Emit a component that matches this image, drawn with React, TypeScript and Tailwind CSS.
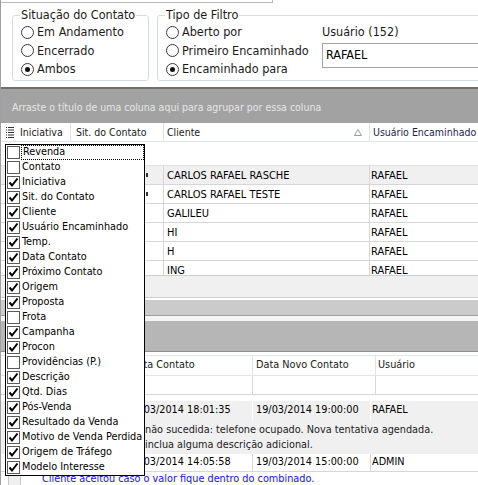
import React from 'react';

const columns = [
  { label: 'Revenda', checked: false },
  { label: 'Contato', checked: false },
  { label: 'Iniciativa', checked: true },
  { label: 'Sit. do Contato', checked: true },
  { label: 'Cliente', checked: true },
  { label: 'Usuário Encaminhado', checked: true },
  { label: 'Temp.', checked: true },
  { label: 'Data Contato', checked: true },
  { label: 'Próximo Contato', checked: true },
  { label: 'Origem', checked: true },
  { label: 'Proposta', checked: true },
  { label: 'Frota', checked: false },
  { label: 'Campanha', checked: true },
  { label: 'Procon', checked: true },
  { label: 'Providências (P.)', checked: false },
  { label: 'Descrição', checked: true },
  { label: 'Qtd. Dias', checked: true },
  { label: 'Pós-Venda', checked: true },
  { label: 'Resultado da Venda', checked: true },
  { label: 'Motivo de Venda Perdida', checked: true },
  { label: 'Origem de Tráfego', checked: true },
  { label: 'Modelo Interesse', checked: true },
];

const contacts = [
  { cliente: 'CARLOS RAFAEL RASCHE', usuario: 'RAFAEL', mark: true },
  { cliente: 'CARLOS RAFAEL TESTE', usuario: 'RAFAEL', mark: true },
  { cliente: 'GALILEU', usuario: 'RAFAEL', mark: false },
  { cliente: 'HI', usuario: 'RAFAEL', mark: false },
  { cliente: 'H', usuario: 'RAFAEL', mark: false },
  { cliente: 'ING', usuario: 'RAFAEL', mark: false },
];

function Radio({ label, checked }: { label: string; checked?: boolean }) {
  return (
    <div className="flex items-center h-[18.5px] whitespace-nowrap">
      <span className="ml-[1px] w-[13px] h-[13px] shrink-0 rounded-full border border-[#3a3a3a] bg-white flex items-center justify-center">
        {checked && <span className="w-[5px] h-[5px] rounded-full bg-[#111]" />}
      </span>
      <span className="ml-[3px]">{label}</span>
    </div>
  );
}

function Check({ checked }: { checked: boolean }) {
  return (
    <span className="w-[13px] h-[13px] shrink-0 border border-[#5a5a5a] bg-white flex items-center justify-center">
      {checked && (
        <svg width="11" height="11" viewBox="0 0 11 11">
          <path d="M1.5 5.5 L4 8.5 L9.5 1.5" fill="none" stroke="#000" strokeWidth="2" />
        </svg>
      )}
    </span>
  );
}

export default function App() {
  return (
    <div className="relative w-[478px] h-[485px] overflow-hidden bg-white border-l border-[#a0a0a0] font-['DejaVu_Sans_Condensed','DejaVu_Sans',sans-serif] text-[10.8px] leading-none text-[#1a1a1a]">
      {/* filtros */}
      <div className="h-[87px] text-[12.5px]">
        <div className="h-[3px] w-[272px] border-b border-r border-[#b8b8b8]" />
        <div className="flex mt-[12px]">
          <div className="ml-[11px] w-[137px] shrink-0 h-[66px] border border-[#d5dde3] rounded-[3px] pl-[7px]">
            <div className="-mt-[8px] w-fit bg-white px-[1px] leading-[14px] whitespace-nowrap">Situação do Contato</div>
            <div className="pt-[1px]">
              <Radio label="Em Andamento" />
              <Radio label="Encerrado" />
              <Radio label="Ambos" checked />
            </div>
          </div>
          <div className="ml-[8px] w-[340px] shrink-0 h-[66px] border border-[#d5dde3] rounded-[3px] pl-[7px]">
            <div className="-mt-[8px] w-fit bg-white px-[1px] leading-[14px] whitespace-nowrap">Tipo de Filtro</div>
            <div className="flex pt-[1px]">
              <div className="w-[157px] shrink-0">
                <Radio label="Aberto por" />
                <Radio label="Primeiro Encaminhado" />
                <Radio label="Encaminhado para" checked />
              </div>
              <div>
                <div className="h-[18.5px] flex items-center whitespace-nowrap">Usuário (152)</div>
                <div className="mt-[1.5px] h-[25px] w-[170px] border border-[#a3a3a3] flex items-center px-[3px] text-black">
                  RAFAEL
                </div>
              </div>
            </div>
          </div>
        </div>
      </div>
      <div className="h-[2px] bg-[#6f6f6f]" />

      {/* grid principal */}
      <div className="h-[34px] bg-[#a2a2a2] flex items-center pl-[11px] pt-[3px] text-[10.5px] text-[#e6e6e6] whitespace-nowrap">
        Arraste o título de uma coluna aqui para agrupar por essa coluna
      </div>
      <div className="h-[19px] flex items-center border-b border-[#e1e6ea] whitespace-nowrap text-[10.5px]">
        <div className="w-[16px] h-full flex items-center justify-end pr-[3px]">
          <svg width="8" height="13" viewBox="0 0 8 13">
            {[1, 3.5, 6, 8.5, 11].map((y) => (
              <g key={y}>
                <rect x="0" y={y} width="1" height="1" fill="#333" />
                <rect x="2" y={y} width="6" height="1" fill="#333" />
              </g>
            ))}
          </svg>
        </div>
        <div className="w-[54px] h-full flex items-center pl-[3px] border-r border-[#e2e2e2]">Iniciativa</div>
        <div className="w-[93px] h-full flex items-center pl-[5px] border-r border-[#e2e2e2]">Sit. do Contato</div>
        <div className="w-[206px] h-full flex items-center justify-between pl-[3px] pr-[7px] border-r border-[#e2e2e2]">
          <span>Cliente</span>
          <svg width="8" height="7" viewBox="0 0 8 7">
            <path d="M4 0.5 L7.5 6.5 L0.5 6.5 Z" fill="none" stroke="#9a9a9a" strokeWidth="1" />
          </svg>
        </div>
        <div className="flex-1 h-full flex items-center pl-[3px] text-[#1c2458]">Usuário Encaminhado</div>
      </div>
      <div className="h-[24px] border-b border-[#e0e0e0]" />
      <div className="h-[109px] overflow-hidden text-[11px]">
        {contacts.map((c, i) => (
          <div key={c.cliente} className={`h-[19px] flex border-b border-[#d6d6d6] ${i === 0 ? 'bg-[#f0f0f0]' : 'bg-white'}`}>
            <div className="w-[162px] flex items-center justify-end pr-[15px]">
              {c.mark && <span className="w-[2px] h-[4px] bg-[#333]" />}
            </div>
            <div className="w-[206px] flex items-center pl-[3px] border-l border-[#d6d6d6] text-black">{c.cliente}</div>
            <div className="flex-1 flex items-center pl-[1px] border-l border-[#d6d6d6] text-black">{c.usuario}</div>
          </div>
        ))}
      </div>
      <div className="h-[23px] bg-[#f0f0f0] border-t border-[#cfcfcf] border-b border-[#a3a3a3]" />
      <div className="h-[2px]" />
      <div className="h-[16px] bg-[#cbcbcb] border-b border-[#9d9d9d]" />
      <div className="h-[5px] bg-[#f4f4f4]" />
      <div className="h-[31px] bg-[#b6b6b6] border-b border-[#8e8e8e]" />
      <div className="h-[3px]" />

      {/* grid de historico */}
      <div className="h-[21px] flex border-t border-[#cdcdcd] border-b border-[#e1e6ea] whitespace-nowrap">
        <div className="w-[124px]" />
        <div className="w-[128px] flex items-center pl-[5px] border-r border-[#e2e2e2]">Data Contato</div>
        <div className="w-[123px] flex items-center pl-[3px] border-r border-[#e2e2e2]">Data Novo Contato</div>
        <div className="flex-1 flex items-center pl-[2px]">Usuário</div>
      </div>
      <div className="h-[19px] flex border-b border-[#d6d6d6]">
        <div className="w-[251px]" />
        <div className="w-[123px] border-l border-[#d6d6d6]" />
        <div className="flex-1 border-l border-[#d6d6d6]" />
      </div>
      <div className="h-[6px]" />
      <div className="bg-[#f0f0f0] text-black whitespace-nowrap">
        <div className="h-[19px] flex">
          <div className="w-[124px]" />
          <div className="w-[127px] flex items-center pl-[3px]">19/03/2014 18:01:35</div>
          <div className="w-[118px] flex items-center pl-[3px] border-l border-white">19/03/2014 19:00:00</div>
          <div className="flex-1 flex items-center pl-[1px] border-l border-white">RAFAEL</div>
        </div>
        <div className="h-[34px] pl-[144px] pt-[2px] leading-[15px] text-[#222]">
          <div>não sucedida: telefone ocupado. Nova tentativa agendada.</div>
          <div>inclua alguma descrição adicional.</div>
        </div>
      </div>
      <div className="h-[18px] flex border-b border-[#d6d6d6] text-black whitespace-nowrap">
        <div className="w-[124px]" />
        <div className="w-[127px] flex items-center pl-[3px]">19/03/2014 14:05:58</div>
        <div className="w-[118px] flex items-center pl-[3px] border-l border-[#d6d6d6]">19/03/2014 15:00:00</div>
        <div className="flex-1 flex items-center pl-[1px] border-l border-[#d6d6d6]">ADMIN</div>
      </div>
      <div className="h-[16px] flex">
        <div className="ml-[7px] w-[13px] bg-[#efefef] border-x border-[#c8c8c8]" />
        <div className="pl-[21px] pt-[2px] text-[#1010f0] whitespace-nowrap">
          Cliente aceitou caso o valor fique dentro do combinado.
        </div>
      </div>

      {/* seletor de colunas */}
      <div className="absolute left-[4px] top-[144px] w-[140px] border border-black bg-white">
        {columns.map((col, i) => (
          <div key={col.label} className="h-[15px] flex items-center pl-[1px] text-black">
            <Check checked={col.checked} />
            <span
              className={`ml-[1px] h-full flex items-center pl-[1px] whitespace-nowrap ${
                i === 0 ? 'flex-1 border border-dotted border-black' : ''
              }`}
            >
              {col.label}
            </span>
          </div>
        ))}
      </div>
    </div>
  );
}
